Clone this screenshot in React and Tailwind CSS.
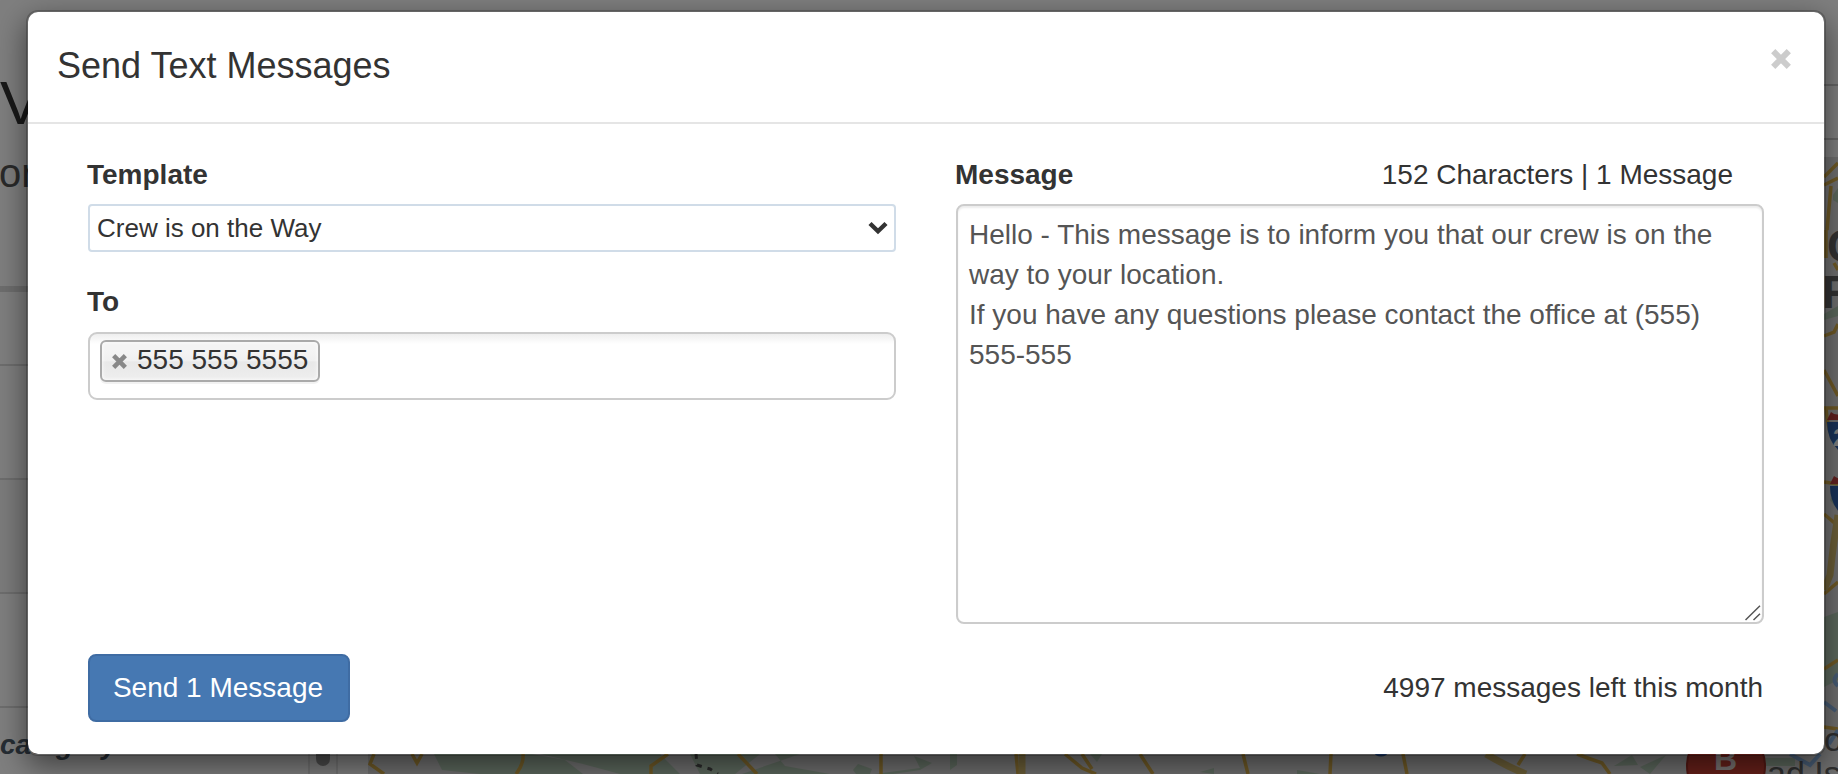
import { useState } from "react";

const defaultMessage =
  "Hello - This message is to inform you that our crew is on the way to your location.\nIf you have any questions please contact the office at (555) 555-555";

function Cross({ className }) {
  return (
    <svg viewBox="0 0 20 20" className={className} stroke="currentColor" strokeWidth="6">
      <path d="M2.2 2.2 17.8 17.8M17.8 2.2 2.2 17.8" />
    </svg>
  );
}

function Shield({ x, y }) {
  return (
    <g transform={`translate(${x} ${y})`}>
      <path d="M4 0Q10 5 17 0Q24 5 30 0L34 8H0Z" fill="#c64340" />
      <path d="M0 10H34Q34 32 17 42Q0 32 0 10Z" fill="#3367b5" />
    </g>
  );
}

function StreetMap() {
  return (
    <svg width="1470" height="617" viewBox="368 157 1470 617" className="block bg-[#dedede]">
      <g fill="#b9d0ba">
        <path d="M434 754 442 770 480 774H583L565 760 532 754ZM540 754 583 764 620 774H680L660 754ZM690 754 700 774H735L760 754ZM775 754 785 766 830 774H742L800 754Z" />
        <path d="M853 770 858 764 872 769 870 774H856ZM914 756 932 763 920 770 893 774H875L920 768ZM950 754H957V765L950 770ZM1090 754H1102L1097 762ZM1200 772 1214 768V774ZM1297 770 1320 774H1297Z" />
        <path d="M1614 766 1632 755 1638 765ZM1640 767 1666 755 1650 774ZM1765 758H1795V766H1765Z" />
        <path d="M1833 195 1838 188V203L1833 200ZM1824 314 1838 306V316L1824 320ZM1830 500 1838 490V510ZM1824 617 1838 612V680L1824 687Z" />
      </g>
      <g fill="none" stroke="#dfb54e" strokeWidth="3.5">
        <path d="M374 754 370 764 384 774M412 754 417 763 422 754M523 754Q524 764 516 774M668 754 651 766V774M738 754 757 774" />
        <path d="M881 754V774M1016 754 1018 774M1065 754 1082 768 1096 774M1082 754 1092 769M1140 754 1153 774M1243 754 1248 774" />
        <path d="M1331 754 1330 774M1403 754 1407 774M1525 754 1518 765M1577 754Q1590 759 1602 763L1610 774" />
        <path d="M1824 177 1838 163M1824 185 1838 178M1831 186 1827 230M1826 230V258M1834 263 1838 270M1824 336 1834 332 1838 324M1824 370 1838 396M1824 408H1838M1826 408Q1828 435 1838 447M1824 482 1838 484M1824 514 1838 526M1824 594 1838 582M1824 669 1838 660M1824 727 1838 729" />
      </g>
      <g fill="none" stroke="#d9bf70" strokeWidth="7">
        <path d="M1022 754V774M1486 754Q1508 767 1526 774M1838 515Q1833 545 1830 575L1824 590" />
      </g>
      <g fill="none" stroke="#8fb8e8" strokeWidth="4">
        <path d="M1838 674Q1831 680 1838 686M1824 702 1836 711M1829 744 1838 730M1790 754 1810 765 1820 754" />
      </g>
      <path d="M696 754 697 765 710 769 718 774" fill="none" stroke="#555" strokeWidth="3" strokeDasharray="5 6" />
      <ellipse cx="1381" cy="752" rx="7" ry="4.5" fill="#3367b5" />
      <Shield x={1827} y={412} />
      <Shield x={1830} y={476} />
      <text x="1833" y="446" fill="#fff" className="text-[24px] font-bold">2</text>
      <g fill="#666" className="text-[46px] font-bold">
        <text x="1827" y="262">C</text>
        <text x="1822" y="308">R</text>
      </g>
      <circle cx="1726" cy="766" r="39" fill="#cf4034" stroke="#a83027" strokeWidth="2" />
      <text x="1714" y="770" fill="#f0e4e2" className="text-[32px] font-bold">B</text>
      <g fill="#606060" className="text-[34px]">
        <text x="1824" y="751">o</text>
        <text x="1767" y="785">ad Is</text>
      </g>
    </svg>
  );
}

function PageBehind() {
  return (
    <div className="absolute inset-0 flex overflow-hidden bg-white">
      <div className="flex w-[368px] shrink-0 flex-col">
        <div className="h-[286px] pt-[68px] text-[#333]">
          <div className="text-[62px] leading-[70px]">V</div>
          <div className="-ml-[12px] mt-[15px] text-[40px] leading-[40px] text-[#555]">for</div>
        </div>
        <div className="h-[6px] bg-[#ddd]" />
        <div className="h-[72px]" />
        <div className="h-[114px] border-t-2 border-[#ddd]" />
        <div className="h-[114px] border-t-2 border-[#ddd] bg-[#f9f9f9]" />
        <div className="h-[114px] border-t-2 border-[#ddd]" />
        <div className="flex h-[68px] border-t-2 border-[#ddd]">
          <div className="w-[308px] pt-[21px] text-[28px] font-bold italic leading-[32px] text-[#4d5a68]">
            category
          </div>
          <div className="w-[30px] border-x-2 border-[#e4e4e4] bg-[#fafafa] px-[6px]">
            <div className="h-[58px] rounded-b-full bg-[#999]" />
          </div>
        </div>
      </div>
      <div className="flex-1">
        <div className="flex h-[157px] flex-col pt-[84px]">
          <div className="h-[56px] border-y-2 border-[#ccc]" />
        </div>
        <StreetMap />
      </div>
    </div>
  );
}

export default function App() {
  const [template, setTemplate] = useState("way");
  const [message, setMessage] = useState(defaultMessage);

  return (
    <div className="relative h-[774px] w-full overflow-hidden font-['Liberation_Sans',Arial,sans-serif] text-[28px] leading-[40px] text-[#333]">
      <PageBehind />
      <div className="absolute inset-0 bg-black/50 pl-[26px] pr-[12px] pt-[10px]">
        <div
          role="dialog"
          className="flex h-[746px] flex-col rounded-[12px] border-2 border-black/20 bg-white bg-clip-padding shadow-[0_10px_30px_rgba(0,0,0,0.5)]"
        >
          <header className="flex h-[112px] shrink-0 items-start justify-between border-b-2 border-[#e5e5e5] pl-[29px] pr-[33px]">
            <h4 className="mt-[28px] text-[36px] leading-[51px]">Send Text Messages</h4>
            <button className="mt-[37px] text-[#ccc]" aria-label="Close">
              <Cross className="size-[20px]" />
            </button>
          </header>

          <main className="grid grid-cols-2 gap-[60px] px-[60px] pt-[31px]">
            <div className="flex flex-col">
              <label className="-ml-px font-bold">Template</label>
              <div className="mt-[9px] flex h-[48px] items-center rounded-[4px] border-2 border-[#d0dce8] pl-[7px] pr-[6px]">
                <select
                  className="h-full flex-1 appearance-none bg-transparent text-[26px] leading-[40px] outline-none"
                  value={template}
                  onChange={(e) => setTemplate(e.target.value)}
                >
                  <option value="way">Crew is on the Way</option>
                </select>
                <svg width="20" height="14" viewBox="0 0 20 14" fill="none" stroke="#333" strokeWidth="4.4">
                  <path d="M2 2.5 10 10.3 18 2.5" />
                </svg>
              </div>

              <label className="-ml-px mt-[30px] font-bold">To</label>
              <div className="mt-[10px] flex h-[68px] items-start rounded-[9px] border-2 border-[#ccc] bg-[linear-gradient(#eee,#fff_10px)] pl-[10px] pt-[6px]">
                <span className="flex h-[42px] w-[220px] items-center gap-[10px] rounded-[6px] border-2 border-[#aaa] bg-[linear-gradient(#f4f4f4_20%,#f0f0f0_50%,#e8e8e8_52%,#eee)] pl-[10px] shadow-[0_0_4px_#fff_inset,0_2px_0_rgba(0,0,0,0.05)]">
                  <Cross className="size-[15px] text-[#888]" />
                  <span className="pb-[3px] leading-[36px]">555 555 5555</span>
                </span>
              </div>
            </div>

            <div className="flex flex-col">
              <div className="flex justify-between pr-[31px]">
                <label className="-ml-px font-bold">Message</label>
                <span>152 Characters | 1 Message</span>
              </div>
              <div className="relative mt-[9px]">
                <textarea
                  className="block h-[420px] w-full resize-none rounded-[8px] border-2 border-[#ccc] px-[11px] pb-[8px] pt-[9px] leading-[40px] text-[#555] shadow-[inset_0_2px_2px_rgba(0,0,0,0.075)] outline-none"
                  value={message}
                  onChange={(e) => setMessage(e.target.value)}
                />
                <svg
                  className="absolute bottom-[3px] right-[3px]"
                  width="16"
                  height="16"
                  viewBox="0 0 16 16"
                  stroke="#555"
                  strokeWidth="1.5"
                >
                  <path d="M.5 15 15 .8M8.5 15 15 8.8" />
                </svg>
              </div>
            </div>
          </main>

          <footer className="mt-[30px] flex items-center justify-between pl-[60px] pr-[61px]">
            <button className="h-[68px] w-[262px] rounded-[8px] border-2 border-[#3f6ca3] bg-[#4678b2] pr-[2px] text-center text-white">
              Send 1 Message
            </button>
            <span>4997 messages left this month</span>
          </footer>
        </div>
      </div>
    </div>
  );
}
